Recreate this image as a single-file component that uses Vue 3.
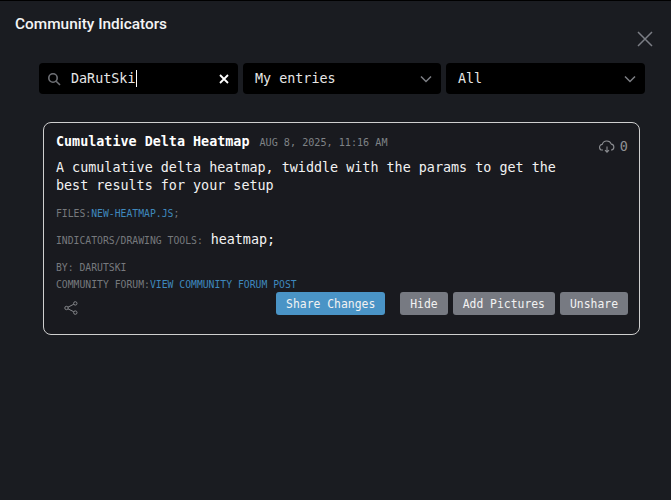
<script setup>
const filters = ['My entries', 'All']
const actions = ['Hide', 'Add Pictures', 'Unshare']
</script>

<template>
  <div class="modal">
    <header class="head">
      <h1>Community Indicators</h1>
      <svg class="close" width="16" height="16" viewBox="0 0 16 16"><path d="M1 1 15 15M15 1 1 15" /></svg>
    </header>
    <div class="filters">
      <div class="field search">
        <svg width="14" height="14" viewBox="0 0 14 14" class="glass"><circle cx="6" cy="6" r="4.2" /><path d="M9.2 9.2 13 13" /></svg>
        <span class="query">DaRutSki<i class="caret"></i></span>
        <svg width="10" height="10" viewBox="0 0 10 10" class="clear"><path d="M1 1 9 9M9 1 1 9" /></svg>
      </div>
      <div v-for="f in filters" :key="f" class="field select">
        <span>{{ f }}</span>
        <svg width="12" height="8" viewBox="0 0 12 8" class="chev"><path d="M1 1.5 6 6.500 11 1.500" /></svg>
      </div>
    </div>
    <article class="card">
      <div class="top">
        <div class="titles">
          <h2>Cumulative Delta Heatmap</h2>
          <time>Aug 8, 2025, 11:16 AM</time>
        </div>
        <div class="downloads">
          <svg width="16" height="13" viewBox="0 0 16 13"><path d="M4 10H3.500A2.800 2.800 0 0 1 3.200 4.400 4.800 4.800 0 0 1 12.300 4.100 3 3 0 0 1 12.500 10H12M8 6.500V12M6 10.200 8 12.200 10 10.200" /></svg>
          <span>0</span>
        </div>
      </div>
      <p class="desc">A cumulative delta heatmap, twiddle with the params to get the best results for your setup</p>
      <p class="meta files">Files:<a>new-heatmap.js</a>;</p>
      <p class="meta tools">Indicators/Drawing Tools: <b>heatmap;</b></p>
      <p class="meta by">By: DaRutSki</p>
      <p class="meta forum">Community Forum:<a>View Community Forum Post</a></p>
      <div class="foot">
        <svg class="share" width="14" height="14" viewBox="0 0 14 14"><circle cx="2.500" cy="7" r="1.700" /><circle cx="11.300" cy="2.400" r="1.700" /><circle cx="11.300" cy="11.600" r="1.700" /><path d="M4 6.200 9.800 3.200M4 7.800 9.800 10.800" /></svg>
        <div class="buttons">
          <button class="primary">Share Changes</button>
          <div class="group">
            <button v-for="a in actions" :key="a">{{ a }}</button>
          </div>
        </div>
      </div>
    </article>
  </div>
</template>

<style>
html, body { margin: 0; background: #1a1c21; }
</style>

<style scoped>
.modal {
  width: 671px;
  height: 500px;
  box-sizing: border-box;
  overflow: hidden;
  background: #1a1c21;
  border-top: 1px solid #000;
  color: #fff;
  font-family: "DejaVu Sans Mono", monospace;
}
.head {
  display: flex;
  justify-content: space-between;
  padding: 13px 18px 0 15px;
  height: 49px;
  box-sizing: border-box;
}
h1 {
  margin: 0;
  font: 500 15.400px/20px Roboto, sans-serif;
  color: #f4f4f5;
}
.close {
  margin-top: 17px;
}
.close path {
  fill: none;
  stroke: #7b7e85;
  stroke-width: 1.500;
}
.filters {
  display: grid;
  grid-template-columns: 199px 198px 199px;
  gap: 5px;
  margin: 13px 0 0 39px;
}
.field {
  height: 31px;
  background: #000;
  border-radius: 4px;
  display: flex;
  align-items: center;
  box-sizing: border-box;
  padding: 0 12px;
  font-size: 13.400px;
  color: #e6e6e6;
}
.search {
  padding: 0 9px 0 8px;
}
.glass {
  flex: none;
}
.glass circle, .glass path {
  fill: none;
  stroke: #6f7176;
  stroke-width: 1.600;
}
.query {
  flex: 1;
  margin-left: 10px;
}
.caret {
  display: inline-block;
  width: 1px;
  height: 17px;
  background: #fff;
  vertical-align: -4px;
}
.clear path {
  fill: none;
  stroke: #fff;
  stroke-width: 1.800;
}
.select {
  justify-content: space-between;
  padding-right: 9px;
}
.chev path {
  fill: none;
  stroke: #7d7f84;
  stroke-width: 1.500;
}
.card {
  margin: 28px 0 0 43px;
  width: 597px;
  height: 213px;
  box-sizing: border-box;
  background: #191a1f;
  border: 1px solid #cfcfcf;
  border-radius: 8px;
  padding: 10px 11px 0 12px;
}
.top {
  display: flex;
  justify-content: space-between;
}
.titles {
  display: flex;
  align-items: baseline;
  gap: 10px;
}
h2 {
  margin: 0;
  font-size: 13.400px;
  line-height: 18px;
  font-weight: 700;
}
time {
  font-size: 10.150px;
  color: #7f8286;
  text-transform: uppercase;
}
.downloads {
  display: flex;
  align-items: center;
  gap: 5px;
  margin: 6px 0 0 0;
  height: 14px;
  font-size: 13.500px;
  color: #8f9194;
}
.downloads svg path {
  fill: none;
  stroke: #8b8d91;
  stroke-width: 1.100;
}
.desc {
  margin: 6px 0 0;
  max-width: 510px;
  font-size: 13.400px;
  line-height: 18px;
  color: #f2f2f2;
}
.meta {
  margin: 0;
  font-size: 9.750px;
  line-height: 15px;
  color: #76797d;
  text-transform: uppercase;
}
.meta a {
  color: #3f88bd;
}
.files {
  margin-top: 11px;
}
.tools {
  margin-top: 9px;
  line-height: 20px;
}
.tools b {
  font-size: 13.400px;
  font-weight: 400;
  color: #f4f4f4;
  text-transform: none;
  margin-left: 2px;
}
.by {
  margin-top: 9px;
}
.forum {
  margin-top: 2px;
}
.foot {
  display: flex;
  justify-content: space-between;
  align-items: flex-start;
  margin-top: 0;
  padding-left: 8px;
}
.share {
  margin-top: 9px;
}
.share circle, .share path {
  fill: none;
  stroke: #85878b;
  stroke-width: 1;
}
.buttons {
  display: flex;
  gap: 15px;
}
.group {
  display: flex;
  gap: 5px;
}
button {
  height: 23px;
  padding: 0 10px;
  border: 0;
  border-radius: 3px;
  background: #777a82;
  color: #f2f2f2;
  font-family: inherit;
  font-size: 11.400px;
}
.primary {
  background: #4a94c6;
}
</style>
